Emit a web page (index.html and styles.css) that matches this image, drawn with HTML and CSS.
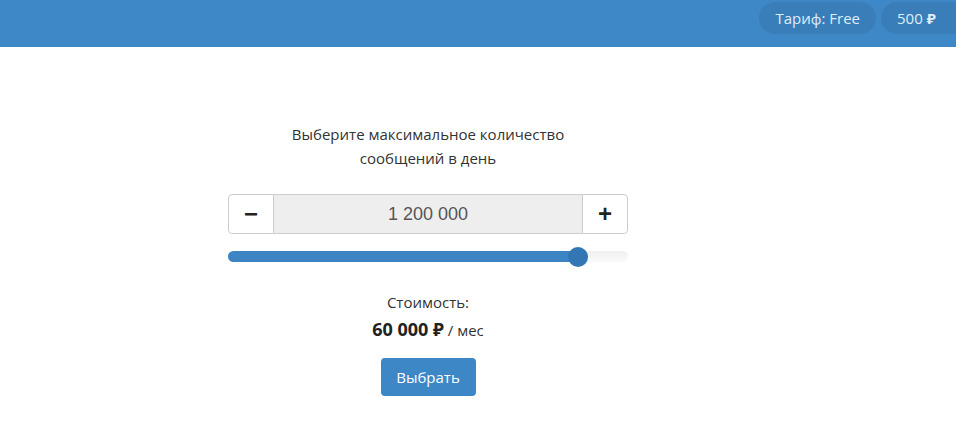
FILE: index.html
```html
<!DOCTYPE html>
<html lang="ru">
<head>
<meta charset="utf-8">
<link rel="stylesheet" href="styles.css">
</head>
<body>
<header class="topbar">
  <span class="pill">Тариф: Free</span>
  <span class="pill pill-balance">500 <b class="rub">₽</b></span>
</header>
<main class="main">
  <section class="panel">
    <p class="lead">Выберите максимальное количество<br>сообщений в день</p>
    <div class="stepper">
      <button class="step-btn">−</button>
      <div class="step-value">1 200 000</div>
      <button class="step-btn">+</button>
    </div>
    <div class="slider">
      <div class="slider-fill"></div>
      <div class="slider-thumb"></div>
    </div>
    <p class="cost-label">Стоимость:</p>
    <p class="cost"><strong>60 000 ₽</strong> / мес</p>
    <button class="choose">Выбрать</button>
  </section>
</main>
</body>
</html>
```
FILE: styles.css
```css
* { box-sizing: border-box; }
body {
  margin: 0;
  font-family: "Open Sans", "Noto Sans", sans-serif;
  color: #333;
  background: #fff;
}
.topbar {
  height: 47px;
  background: #3f88c7;
  display: flex;
  justify-content: flex-end;
  align-items: flex-start;
  gap: 5px;
  padding-top: 2px;
}
.pill {
  height: 32px;
  display: inline-flex;
  align-items: center;
  padding: 0 16px;
  border-radius: 16px;
  background: #3a7eb9;
  color: #deedfa;
  font-size: 15px;
}
.pill-balance { width: 75px; border-radius: 16px 0 0 16px; }
.rub { font-weight: 700; margin-left: 4px; }
.main {
  padding-left: 228px;
  padding-top: 75px;
}
.panel {
  width: 400px;
  display: flex;
  flex-direction: column;
  align-items: center;
}
.lead {
  margin: 0;
  font-size: 15px;
  line-height: 24px;
  text-align: center;
}
.stepper {
  margin-top: 24px;
  width: 400px;
  height: 40px;
  display: flex;
}
.step-btn {
  width: 46px;
  height: 40px;
  background: #fff;
  border: 1px solid #ccc;
  font-family: "Liberation Sans", sans-serif;
  font-size: 24px;
  font-weight: 700;
  color: #222;
  padding: 0;
  line-height: 1;
}
.step-btn:first-child { border-radius: 4px 0 0 4px; }
.step-btn:last-child { border-radius: 0 4px 4px 0; }
.step-value {
  flex: 1;
  background: #eee;
  border-top: 1px solid #ccc;
  border-bottom: 1px solid #ccc;
  display: flex;
  align-items: center;
  justify-content: center;
  font-family: "Liberation Sans", sans-serif;
  font-size: 18px;
  color: #555;
}
.slider {
  position: relative;
  margin-top: 17px;
  width: 400px;
  height: 11px;
  border-radius: 6px;
  background: linear-gradient(#f0f0f0, #fafafa);
}
.slider-fill {
  width: 352px;
  height: 11px;
  border-radius: 6px;
  background: #3d84c4;
}
.slider-thumb {
  position: absolute;
  left: 340px;
  top: -4px;
  width: 20px;
  height: 20px;
  border-radius: 50%;
  background: #3277b4;
}
.cost-label {
  margin: 29px 0 0;
  font-size: 15px;
  line-height: 22px;
}
.cost {
  margin: 4px 0 0;
  font-size: 15px;
  line-height: 24px;
}
.cost strong { font-size: 18px; font-weight: 700; color: #222; }
.choose {
  margin-top: 16px;
  width: 95px;
  height: 38px;
  border: none;
  border-radius: 4px;
  background: #3d87c7;
  color: #fff;
  font-family: "Open Sans", "Noto Sans", sans-serif;
  font-size: 15px;
}
```
